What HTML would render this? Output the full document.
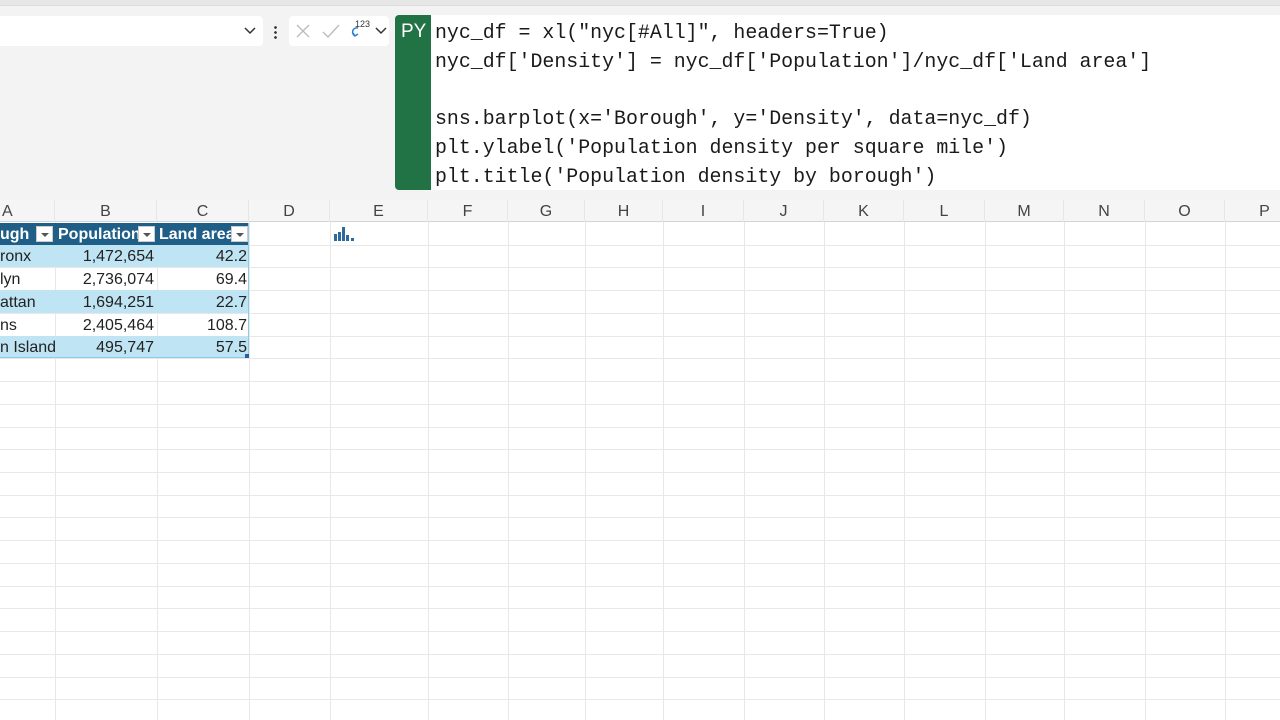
<!DOCTYPE html>
<html><head><style>
*{margin:0;padding:0;box-sizing:border-box}
body{width:1280px;height:720px;overflow:hidden;background:#fff;font-family:"Liberation Sans",sans-serif;position:relative}
.top{position:absolute;left:0;top:0;width:1280px;height:200px;background:#f3f3f3}
.strip{position:absolute;left:0;top:0;width:1280px;height:6px;background:#e6e6e6;border-bottom:1px solid #dcdcdc}
.namebox{position:absolute;left:0;top:16px;width:263px;height:30px;background:#fff;border-radius:0 4px 4px 0}
.fx{position:absolute;left:289px;top:16px;width:100px;height:30px;background:#fff;border-radius:4px}
.py{position:absolute;left:395px;top:15px;width:36px;height:175px;background:#217346;border-radius:4px 0 0 4px;color:#fff;font-size:19px;padding:6px 0 0 6px}
.code{position:absolute;left:431px;top:15px;width:849px;height:175px;background:#fff;font-family:"Liberation Mono",monospace;font-size:19.9px;line-height:28.7px;padding:4px 0 0 4px;color:#1a1a1a;white-space:pre}
.colhdr{position:absolute;left:0;top:200px;width:1280px;height:22px;background:#f5f5f5;border-bottom:1px solid #d4d4d4}
.ch{position:absolute;top:0;height:22px;line-height:23px;text-align:center;color:#444;font-size:16px;border-right:1px solid #e6e6e6}
.vl{position:absolute;top:222px;height:498px;width:1px;background:#e8e8e8}
.hl{position:absolute;left:0;width:1280px;height:1px;background:#e8e8e8}
.cell{position:absolute;height:22px;line-height:24px;font-size:16px;color:#222;overflow:hidden;white-space:nowrap}
.th{background:#1f5f87;color:#fff;font-weight:bold}
.dd{position:absolute;top:3px;width:17px;height:16px;background:#fff;border:1px solid #ccc}
.dd:after{content:"";position:absolute;left:4px;top:6px;border-left:4px solid transparent;border-right:4px solid transparent;border-top:4px solid #555}
</style></head><body>
<div class="top"></div><div class="strip"></div>
<div class="namebox"><svg style="position:absolute;left:244px;top:11px" width="12" height="8"><path d="M1 1L6 6L11 1" stroke="#333" fill="none" stroke-width="1.5"/></svg></div>
<div style="position:absolute;left:274px;top:25px;width:3px;height:14px;background:radial-gradient(circle,#333 1.2px,transparent 1.5px) 0 0/3px 5px"></div>
<div class="fx">
<svg style="position:absolute;left:6px;top:7px" width="16" height="16"><path d="M2 2L14 14M14 2L2 14" stroke="#bbb" stroke-width="1.3"/></svg>
<svg style="position:absolute;left:33px;top:7px" width="18" height="16"><path d="M1 9L6 14L17 2" stroke="#bbb" fill="none" stroke-width="1.3"/></svg>
<svg style="position:absolute;left:60px;top:6px" width="14" height="20"><path d="M9 6C3 5 2 12 6 14M4 11L6 14L9 12" stroke="#2b7cd3" fill="none" stroke-width="1.5"/></svg>
<span style="position:absolute;left:66px;top:3px;font-size:9px;color:#333">123</span>
<svg style="position:absolute;left:86px;top:11px" width="12" height="8"><path d="M1 1L6 6L11 1" stroke="#333" fill="none" stroke-width="1.5"/></svg>
</div>
<div class="py">PY</div>
<div class="code">nyc_df = xl("nyc[#All]", headers=True)
nyc_df['Density'] = nyc_df['Population']/nyc_df['Land area']

sns.barplot(x='Borough', y='Density', data=nyc_df)
plt.ylabel('Population density per square mile')
plt.title('Population density by borough')</div>
<div class="colhdr">
<div class="ch" style="left:0;width:55px;text-align:left;padding-left:2px">A</div>
<div class="ch" style="left:55px;width:102px">B</div>
<div class="ch" style="left:157px;width:92px">C</div>
<div class="ch" style="left:249px;width:81px">D</div>
<div class="ch" style="left:330px;width:98px">E</div>
<div class="ch" style="left:428px;width:80px">F</div>
<div class="ch" style="left:508px;width:77px">G</div>
<div class="ch" style="left:585px;width:78px">H</div>
<div class="ch" style="left:663px;width:81px">I</div>
<div class="ch" style="left:744px;width:80px">J</div>
<div class="ch" style="left:824px;width:80px">K</div>
<div class="ch" style="left:904px;width:81px">L</div>
<div class="ch" style="left:985px;width:79px">M</div>
<div class="ch" style="left:1064px;width:81px">N</div>
<div class="ch" style="left:1145px;width:80px">O</div>
<div class="ch" style="left:1225px;width:80px">P</div>
</div>
<div class="vl" style="left:55px"></div><div class="vl" style="left:157px"></div><div class="vl" style="left:249px"></div><div class="vl" style="left:330px"></div><div class="vl" style="left:428px"></div><div class="vl" style="left:508px"></div><div class="vl" style="left:585px"></div><div class="vl" style="left:663px"></div><div class="vl" style="left:744px"></div><div class="vl" style="left:824px"></div><div class="vl" style="left:904px"></div><div class="vl" style="left:985px"></div><div class="vl" style="left:1064px"></div><div class="vl" style="left:1145px"></div><div class="vl" style="left:1225px"></div>
<div class="hl" style="top:245px"></div><div class="hl" style="top:267px"></div><div class="hl" style="top:290px"></div><div class="hl" style="top:313px"></div><div class="hl" style="top:336px"></div><div class="hl" style="top:358px"></div><div class="hl" style="top:381px"></div><div class="hl" style="top:404px"></div><div class="hl" style="top:427px"></div><div class="hl" style="top:449px"></div><div class="hl" style="top:472px"></div><div class="hl" style="top:495px"></div><div class="hl" style="top:517px"></div><div class="hl" style="top:540px"></div><div class="hl" style="top:563px"></div><div class="hl" style="top:586px"></div><div class="hl" style="top:608px"></div><div class="hl" style="top:631px"></div><div class="hl" style="top:654px"></div><div class="hl" style="top:677px"></div><div class="hl" style="top:699px"></div>
<!-- table -->
<div style="position:absolute;left:0;top:223px;width:249px;height:22px;background:#1f5f87"></div>
<div class="cell th" style="left:0;top:223px;width:55px">ugh</div><div class="dd" style="left:36px;top:226px"></div>
<div class="cell th" style="left:58px;top:223px;width:80px">Population</div><div class="dd" style="left:138px;top:226px"></div>
<div class="cell th" style="left:159px;top:223px;width:72px">Land area</div><div class="dd" style="left:231px;top:226px"></div>
<div style="position:absolute;left:0;top:245px;width:249px;height:22px;background:#bfe4f3"></div>
<div style="position:absolute;left:0;top:290px;width:249px;height:23px;background:#bfe4f3"></div>
<div style="position:absolute;left:0;top:336px;width:249px;height:22px;background:#bfe4f3"></div>
<div style="position:absolute;left:0;top:223px;width:249px;height:135px;border-right:1px solid #8ccbe8;border-bottom:1px solid #8ccbe8"></div>
<div class="cell" style="left:0;top:245px">ronx</div><div class="cell" style="left:55px;top:245px;width:99px;text-align:right">1,472,654</div><div class="cell" style="left:157px;top:245px;width:90px;text-align:right">42.2</div>
<div class="cell" style="left:0;top:268px">lyn</div><div class="cell" style="left:55px;top:268px;width:99px;text-align:right">2,736,074</div><div class="cell" style="left:157px;top:268px;width:90px;text-align:right">69.4</div>
<div class="cell" style="left:0;top:291px">attan</div><div class="cell" style="left:55px;top:291px;width:99px;text-align:right">1,694,251</div><div class="cell" style="left:157px;top:291px;width:90px;text-align:right">22.7</div>
<div class="cell" style="left:0;top:314px">ns</div><div class="cell" style="left:55px;top:314px;width:99px;text-align:right">2,405,464</div><div class="cell" style="left:157px;top:314px;width:90px;text-align:right">108.7</div>
<div class="cell" style="left:0;top:336px">n Island</div><div class="cell" style="left:55px;top:336px;width:99px;text-align:right">495,747</div><div class="cell" style="left:157px;top:336px;width:90px;text-align:right">57.5</div>
<div style="position:absolute;left:245px;top:354px;width:4px;height:4px;background:#2a5caa"></div>
<svg style="position:absolute;left:333px;top:225px" width="26" height="18"><rect x="1" y="9" width="3" height="7" fill="#2d6aa0"/><rect x="5" y="7" width="3" height="9" fill="#2d6aa0"/><rect x="9" y="2" width="3" height="14" fill="#2d6aa0"/><rect x="13" y="10" width="3" height="6" fill="#2d6aa0"/><rect x="18" y="13" width="3" height="3" fill="#2d6aa0"/></svg>
</body></html>
